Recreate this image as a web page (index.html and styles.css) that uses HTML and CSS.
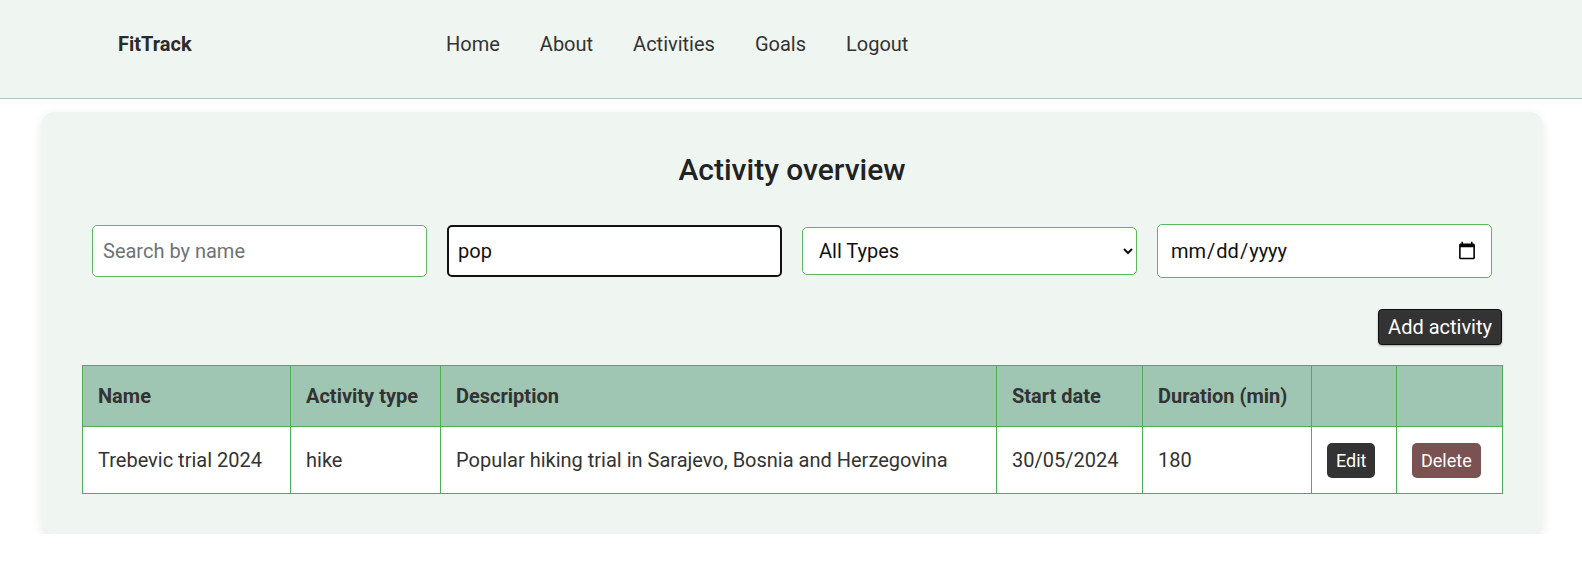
FILE: index.html
```html
<!DOCTYPE html>
<html lang="en">
<head>
<meta charset="utf-8">
<title>FitTrack</title>
<link rel="stylesheet" href="styles.css">
</head>
<body>
<header class="topbar">
  <div class="brand">FitTrack</div>
  <nav class="nav">
    <a href="#">Home</a>
    <a href="#">About</a>
    <a href="#">Activities</a>
    <a href="#">Goals</a>
    <a href="#">Logout</a>
  </nav>
</header>
<main class="card">
  <h2 class="title">Activity overview</h2>
  <div class="filters">
    <input class="field field-text" type="text" placeholder="Search by name">
    <input class="field field-focus" type="text" value="pop">
    <select class="field field-select">
      <option>All Types</option>
    </select>
    <input class="field field-date" type="date">
  </div>
  <div class="actions">
    <button class="btn-add">Add activity</button>
  </div>
  <table class="tbl">
    <colgroup>
      <col class="c-name"><col class="c-type"><col class="c-desc"><col class="c-date"><col class="c-dur"><col class="c-edit"><col class="c-del">
    </colgroup>
    <thead>
      <tr><th>Name</th><th>Activity type</th><th>Description</th><th>Start date</th><th>Duration (min)</th><th></th><th></th></tr>
    </thead>
    <tbody>
      <tr>
        <td>Trebevic trial 2024</td>
        <td>hike</td>
        <td>Popular hiking trial in Sarajevo, Bosnia and Herzegovina</td>
        <td>30/05/2024</td>
        <td>180</td>
        <td><button class="btn-sm btn-edit">Edit</button></td>
        <td><button class="btn-sm btn-del">Delete</button></td>
      </tr>
    </tbody>
  </table>
</main>
</body>
</html>
```
FILE: styles.css
```css
* { box-sizing: border-box; }
body {
  margin: 0;
  font-family: Roboto, "Liberation Sans", Arial, sans-serif;
  color: #333;
  background: #fff;
}
.topbar {
  height: 99px;
  background: #eff5f1;
  border-bottom: 1px solid #aec4c2;
  display: flex;
  align-items: flex-start;
  padding: 33px 0 0 118px;
}
.brand {
  font-size: 20px;
  font-weight: 700;
  line-height: 23px;
  width: 328px;
  color: #2b2b2b;
}
.nav {
  display: flex;
  gap: 40px;
}
.nav a {
  font-size: 20px;
  line-height: 23px;
  color: #333;
  text-decoration: none;
}
.card {
  margin: 13px 40px 0 42px;
  background: #eff5f1;
  border-radius: 12px;
  box-shadow: 0 4px 12px rgba(0,0,0,0.1);
  padding: 40px;
}
.title {
  margin: 0;
  text-align: center;
  font-size: 30px;
  font-weight: 500;
  line-height: 35px;
  color: #222;
}
.filters {
  margin: 36px 10px 0 10px;
  display: grid;
  grid-template-columns: repeat(4, 1fr);
  gap: 20px;
  align-items: center;
  height: 56px;
}
.field {
  font-family: Roboto, "Liberation Sans", Arial, sans-serif;
  font-size: 20px;
  color: #111;
  background: #fff;
  border: 1px solid #5cb85c;
  border-radius: 5px;
  outline: none;
  width: 100%;
}
.field-text {
  height: 52px;
  padding: 0 10px;
}
.field-text::placeholder { color: #6e7378; }
.field-focus {
  height: 52px;
  padding: 0 9px;
  border: 2px solid #111;
}
.field-select {
  height: 48px;
  padding: 0 10px 0 12px;
}
.field-date {
  height: 54px;
  padding: 0 12px;
}
.actions {
  display: flex;
  justify-content: flex-end;
  margin-top: 30px;
}
.btn-add {
  font-family: Roboto, "Liberation Sans", Arial, sans-serif;
  font-size: 20px;
  color: #fff;
  background: #333;
  border: 1px solid #111;
  border-radius: 4px;
  height: 36px;
  padding: 0 9px;
  box-shadow: 0 1px 2px rgba(0,0,0,0.3);
}
.tbl {
  margin-top: 20px;
  width: 100%;
  border-collapse: collapse;
  table-layout: fixed;
  background: #fff;
}
.c-name { width: 208px; }
.c-type { width: 150px; }
.c-desc { width: 556px; }
.c-date { width: 146px; }
.c-dur { width: 169px; }
.c-edit { width: 85px; }
.c-del { width: 106px; }
.tbl th, .tbl td {
  border: 1px solid #4caf50;
  text-align: left;
  font-size: 20px;
  line-height: 23px;
  padding: 0 15px;
  vertical-align: middle;
}
.tbl th {
  background: #9fc5b3;
  font-weight: 700;
  color: #333;
  height: 61px;
}
.tbl td {
  height: 67px;
  color: #333;
}
.btn-sm {
  font-family: Roboto, "Liberation Sans", Arial, sans-serif;
  font-size: 18px;
  color: #fff;
  border: none;
  border-radius: 5px;
  height: 35px;
  padding: 0 9px;
}
.btn-edit { background: #333; }
.btn-del { background: #7a5252; }
```
